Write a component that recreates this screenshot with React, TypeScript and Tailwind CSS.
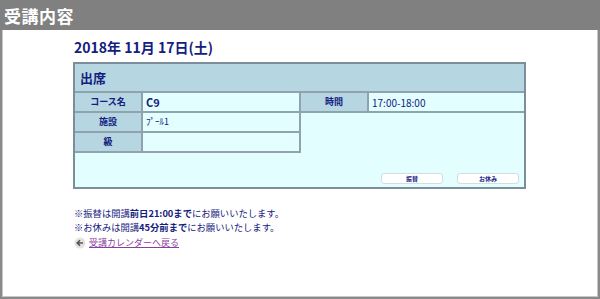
import React from "react";

const font = { fontFamily: '"Noto Sans CJK JP", "Noto Sans", sans-serif' };

export default function App() {
  return (
    <div className="w-[600px] h-[299px] flex flex-col bg-white" style={font}>
      <div className="h-[30px] bg-[#808080] flex items-center pl-[4px]">
        <span className="text-white font-bold text-[17px] leading-none tracking-[0.5px]">受講内容</span>
      </div>
      <div className="flex-1 border-l-2 border-r-2 border-b-2 border-[#8a8a8a] flex">
        <div className="flex-1 border-l border-r border-b border-[#c8c8c8] pl-[71px] pt-[9px]">
          <div className="text-[14px] font-bold text-[#14207e] leading-[16px]">2018年 11月 17日(土)</div>
          <div className="mt-[7px] -ml-[1px] w-[453px] border-2 border-[#7c8e9a] bg-[#e2feff]">
            <div className="h-[29px] bg-[#b6d6e2] border-b-2 border-[#8fa2ad] flex items-center pl-[5px]">
              <span className="text-[13px] font-bold text-[#14207e]">出席</span>
            </div>
            <div className="flex">
              <div className="w-[226px] flex flex-col">
                {[
                  ["コース名", "C9", "font-bold text-[11px]"],
                  ["施設", "ﾌﾟｰﾙ1", "text-[9px]"],
                  ["級", "", ""],
                ].map(([l, v, c]) => (
                  <div key={l} className="h-[20px] flex border-b-2 border-[#8fa2ad]">
                    <div className="w-[66px] bg-[#b6d6e2] flex items-center justify-center text-[9px] font-bold text-[#14207e]">
                      {l}
                    </div>
                    <div className={`flex-1 border-l-2 border-r-2 border-[#8fa2ad] bg-[#e2feff] flex items-center pl-[3px] text-[#14207e] ${c}`}>
                      {v}
                    </div>
                  </div>
                ))}
              </div>
              <div className="flex-1 flex flex-col">
                <div className="h-[20px] flex border-b-2 border-[#8fa2ad]">
                  <div className="w-[66px] bg-[#b6d6e2] flex items-center justify-center text-[9px] font-bold text-[#14207e]">
                    時間
                  </div>
                  <div className="flex-1 border-l-2 border-[#8fa2ad] flex items-center pl-[3px] text-[10px] text-[#14207e]">
                    17:00-18:00
                  </div>
                </div>
              </div>
            </div>
            <div className="flex justify-end gap-[14px] pt-[20px] pb-[3px] pr-[5px]">
              {["振替", "お休み"].map((b) => (
                <div
                  key={b}
                  className="w-[62px] h-[11px] bg-white rounded-[3px] border border-[#d6dde0] flex items-center justify-center text-[6px] font-bold text-[#14207e] leading-none"
                >
                  {b}
                </div>
              ))}
            </div>
          </div>
          <div className="mt-[17px] text-[9.3px] text-[#14207e] leading-[14px]">
            <div>
              ※振替は開講<span className="font-bold">前日21:00まで</span>にお願いいたします。
            </div>
            <div>
              ※お休みは開講<span className="font-bold">45分前まで</span>にお願いいたします。
            </div>
            <div className="flex items-center gap-[3px] mt-[2px]">
              <svg width="12" height="12" viewBox="0 0 12 12">
                <circle cx="6" cy="6" r="5.5" fill="#e2e2e2" />
                <path d="M9 6H3.5M6 3.2L3.2 6L6 8.8" stroke="#555" strokeWidth="1.6" fill="none" />
              </svg>
              <span className="text-[#8a3f9c] underline text-[9px]">受講カレンダーへ戻る</span>
            </div>
          </div>
        </div>
      </div>
    </div>
  );
}
